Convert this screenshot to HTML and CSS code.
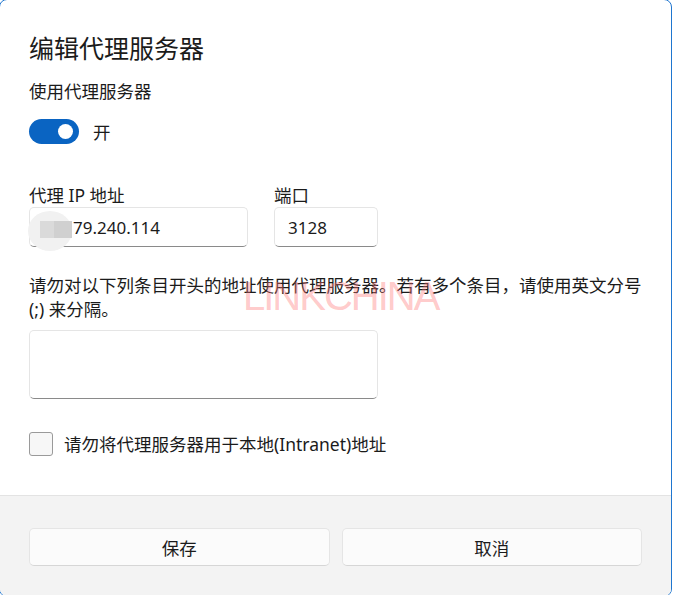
FILE: index.html
```html
<!DOCTYPE html>
<html lang="zh-CN">
<head>
    <meta charset="UTF-8">
    <title>编辑代理服务器</title>
    <link rel="stylesheet" href="styles.css">
</head>
<body>
    <div class="dialog">
        <div class="dialog-body">
            <h1 class="title">编辑代理服务器</h1>
            <div class="label">使用代理服务器</div>
            <div class="toggle-row">
                <span class="toggle on"><span class="thumb"></span></span>
                <span class="toggle-text">开</span>
            </div>

            <div class="fields">
                <div class="field field-ip">
                    <div class="label">代理 IP 地址</div>
                    <div class="textbox">
                        <span class="masked"></span>
                        <span class="value">79.240.114</span>
                    </div>
                </div>
                <div class="field field-port">
                    <div class="label">端口</div>
                    <div class="textbox port">
                        <span class="value">3128</span>
                    </div>
                </div>
            </div>

            <p class="hint">请勿对以下列条目开头的地址使用代理服务器。若有多个条目，请使用英文分号 (;) 来分隔。</p>
            <div class="textbox exclusions"></div>

            <label class="check-row">
                <span class="checkbox"></span>
                <span>请勿将代理服务器用于本地(Intranet)地址</span>
            </label>
        </div>

        <div class="dialog-footer">
            <button class="btn">保存</button>
            <button class="btn">取消</button>
        </div>

        <div class="watermark">LINKCHINA</div>
    </div>
</body>
</html>
```

FILE: styles.css
```css
* {
    box-sizing: border-box;
}
body {
    margin: 0;
    background-color: white;
    font-family: "Segoe UI", "Noto Sans", "Noto Sans CJK SC", sans-serif;
    font-size: 17.5px;
    color: #1b1b1b;
    overflow: hidden;
}
.dialog {
    position: relative;
    width: 673px;
    height: 598px;
    margin: -1px 0 0 -1px;
    border: 1px solid #1f76cf;
    border-radius: 8px;
    display: flex;
    flex-direction: column;
    overflow: hidden;
    background-color: white;
}
.dialog-body {
    flex: 1;
    padding: 31px 24px 0 29px;
}
.title {
    margin: 0;
    font-size: 25px;
    font-weight: normal;
    line-height: 34px;
}
.label {
    line-height: 24px;
}
.title + .label {
    margin-top: 14px;
}
.toggle-row {
    display: flex;
    align-items: center;
    gap: 14px;
    margin-top: 16px;
    height: 25px;
}
.toggle {
    position: relative;
    width: 50px;
    height: 25px;
    border-radius: 13px;
    background-color: #0a64c2;
}
.toggle .thumb {
    position: absolute;
    top: 5px;
    right: 6px;
    width: 15px;
    height: 15px;
    border-radius: 50%;
    background-color: white;
}
.fields {
    display: flex;
    gap: 26px;
    margin-top: 39px;
}
.field-ip {
    width: 219px;
}
.field-port {
    width: 104px;
}
.textbox {
    position: relative;
    height: 40px;
    border: 1px solid #e5e5e5;
    border-bottom-color: #8a8a8a;
    border-radius: 5px;
    background-color: white;
    display: flex;
    align-items: center;
    padding-left: 13px;
}
.textbox .value {
    font-family: "Noto Sans", sans-serif;
    font-size: 17px;
}
.field-ip .textbox {
    padding-left: 43px;
}
/* blurred first octet */
.masked {
    position: absolute;
    left: -2px;
    top: 3px;
    width: 44px;
    height: 40px;
    border-radius: 50%;
    background-color: #f1f1f1;
}
.masked::after {
    content: "";
    position: absolute;
    left: 12px;
    top: 10px;
    width: 32px;
    height: 17px;
    background: linear-gradient(to right, #dadada 0, #dadada 45%, #d0d0d0 45%);
}
.hint {
    margin: 26px 0 0;
    line-height: 24px;
}
.exclusions {
    width: 349px;
    height: 69px;
    margin-top: 9px;
}
.check-row {
    display: flex;
    align-items: center;
    gap: 11px;
    margin-top: 33px;
    line-height: 24px;
}
.checkbox {
    width: 24px;
    height: 24px;
    border: 1px solid #9a9a9a;
    border-radius: 3px;
    background-color: #f7f7f7;
}
.dialog-footer {
    height: 101px;
    border-top: 1px solid #e3e3e3;
    background-color: #f3f3f3;
    display: flex;
    gap: 12px;
    padding: 32px 29px 0 29px;
}
.btn {
    flex: 1;
    height: 38px;
    border: 1px solid #e5e5e5;
    border-bottom-color: #d6d6d6;
    border-radius: 5px;
    background-color: #fbfbfb;
    font-family: inherit;
    font-size: 17.5px;
    color: #1b1b1b;
}
.watermark {
    position: absolute;
    left: 243px;
    top: 274px;
    font-family: "Liberation Sans", sans-serif;
    font-size: 40px;
    letter-spacing: -2px;
    color: rgba(255, 120, 120, 0.4);
    pointer-events: none;
}
```
